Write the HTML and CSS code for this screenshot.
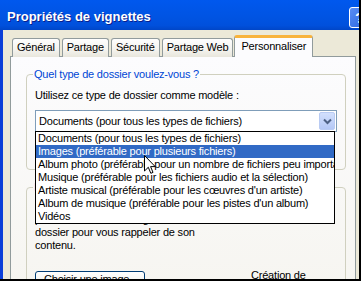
FILE: index.html
```html
<!DOCTYPE html>
<html lang="fr">
<head>
  <meta charset="UTF-8" />
  <title>Propriétés de vignettes</title>
  <link rel="stylesheet" href="styles.css">
</head>
<body>

  <div class="window">
    <div class="titlebar">
      <span class="title">Propriétés de vignettes</span>
      <span class="help-btn">?</span>
    </div>

    <div class="client">
      <div class="tabs">
        <div class="tab">Général</div>
        <div class="tab">Partage</div>
        <div class="tab">Sécurité</div>
        <div class="tab">Partage Web</div>
        <div class="tab active">Personnaliser</div>
      </div>

      <div class="panel">
        <fieldset class="group group-type">
          <legend>Quel type de dossier voulez-vous ?</legend>
          <div class="label">Utilisez ce type de dossier comme modèle :</div>

          <div class="combo">
            <span class="combo-value">Documents (pour tous les types de fichiers)</span>
            <span class="combo-btn">
              <svg width="9" height="7" viewBox="0 0 9 7"><path d="M1 1.5 L4.5 5 L8 1.5" fill="none" stroke="#4d6185" stroke-width="2"/></svg>
            </span>

            <!-- liste ouverte, par-dessus le reste -->
            <ul class="dropdown">
              <li>Documents (pour tous les types de fichiers)</li>
              <li class="selected">Images (préférable pour plusieurs fichiers)</li>
              <li>Album photo (préférable pour un nombre de fichiers peu important)</li>
              <li>Musique (préférable pour les fichiers audio et la sélection)</li>
              <li>Artiste musical (préférable pour les cœuvres d'un artiste)</li>
              <li>Album de musique (préférable pour les pistes d'un album)</li>
              <li>Vidéos</li>
            </ul>
          </div>

          <label class="check"><span class="box"></span>Appliquer aussi ce modèle à tous les sous-dossiers</label>
        </fieldset>

        <fieldset class="group group-pictures">
          <legend>Images de dossiers</legend>
          <div class="pictures-row">
            <div class="pictures-left">
              <p>Pour la vue Miniatures, vous<br>pouvez mettre une image sur ce<br>dossier pour vous rappeler de son<br>contenu.</p>
              <button class="xp-btn">Choisir une image...</button>
            </div>
            <div class="pictures-right">
              <div>Aperçu :</div>
              <div class="preview"></div>
              <div class="preview-caption">Création de</div>
            </div>
          </div>
        </fieldset>
      </div>
    </div>

    <svg class="cursor" width="12" height="20" viewBox="0 0 12 20">
      <path d="M0.5 0.5 L0.5 16 L4.3 12.3 L6.8 18.3 L9 17.4 L6.6 11.6 L11.2 11.6 Z" fill="#fff" stroke="#000" stroke-width="1"/>
    </svg>
  </div>

</body>
</html>
```

FILE: styles.css
```css
* {
  box-sizing: border-box;
}

body {
  margin: 0;
  font-family: 'Liberation Sans', Arial, sans-serif;
  font-size: 11px;
  letter-spacing: -0.2px;
  color: #000;
}

.window {
  position: relative;
  width: 361px;
  height: 281px;
  overflow: hidden;
  display: flex;
  flex-direction: column;
  background: #ece9d8;
  border-right: 2px solid #000;
  border-bottom: 2px solid #000;
}

/* Barre de titre */
.titlebar {
  height: 30px;
  flex-shrink: 0;
  display: flex;
  align-items: center;
  padding-left: 7px;
  background: linear-gradient(to bottom, #0058ee 0%, #0054e3 55%, #0050dc 85%, #0046c8 100%);
}

.title {
  color: #fff;
  font-weight: bold;
  font-size: 13px;
  letter-spacing: 0;
  text-shadow: 1px 1px 0 #0a1e8c;
  margin-top: 3px;
}

.help-btn {
  margin-left: auto;
  margin-right: -11px;
  margin-top: 5px;
  width: 21px;
  height: 21px;
  border: 1px solid #fff;
  border-radius: 3px;
  background: linear-gradient(to bottom right, #5a8ef5, #2663e0);
  color: #fff;
  font-weight: bold;
  font-size: 15px;
  line-height: 19px;
  text-align: center;
}

/* Zone cliente */
.client {
  flex: 1;
  display: flex;
  flex-direction: column;
  padding: 6px 3px 0 7px;
  border-left: 3px solid #0b3fd8;
}

.tabs {
  display: flex;
  align-items: flex-end;
  padding-left: 2px;
  height: 21px;
  position: relative;
  z-index: 2;
  margin-bottom: -1px;
}

.tab {
  height: 19px;
  padding: 0 4px;
  margin-right: 2px;
  border: 1px solid #919b9c;
  border-bottom: none;
  border-radius: 3px 3px 0 0;
  background: linear-gradient(to bottom, #fefefe, #f4f3ee 60%, #e8e6dc);
  line-height: 17px;
  white-space: nowrap;
}

.tab.active {
  height: 22px;
  margin-left: -1px;
  padding: 0 6px;
  background: #fcfcfe;
  border-top: 3px solid #f8b33c;
  line-height: 16px;
}

.panel {
  flex: 1;
  border: 1px solid #919b9c;
  background: linear-gradient(to bottom, #fcfcfe, #f6f5f0);
  padding: 11px 9px 0 15px;
}

/* Groupes */
.group {
  margin: 0;
  border: 1px solid #d0d0bf;
  border-radius: 4px;
  padding: 0 8px;
}

.group legend {
  color: #0046d5;
  padding: 0 1px;
  margin-left: -2px;
  line-height: 13px;
}

.group-type {
  padding-bottom: 14px;
}

.group-pictures {
  margin-top: 11px;
}

.label {
  line-height: 13px;
  margin-top: 8px;
  margin-bottom: 8px;
}

.combo {
  position: relative;
  height: 22px;
  border: 1px solid #7f9db9;
  background: #fff;
  display: flex;
  align-items: center;
  padding-left: 3px;
}

.combo-value {
  flex: 1;
  white-space: nowrap;
}

.combo-btn {
  width: 16px;
  height: 18px;
  margin-right: 1px;
  border: 1px solid #b9cbf3;
  border-radius: 2px;
  background: linear-gradient(to bottom, #d2e0fd, #b4c8f6);
  display: flex;
  align-items: center;
  justify-content: center;
}

.dropdown {
  position: absolute;
  top: 20px;
  left: -1px;
  width: 300px;
  margin: 0;
  padding: 0;
  list-style: none;
  background: #fff;
  border: 1px solid #000;
  z-index: 5;
}

.dropdown li {
  height: 13px;
  line-height: 13px;
  padding-left: 2px;
  white-space: nowrap;
  overflow: hidden;
}

.dropdown li.selected {
  background: #316ac5;
  color: #fff;
}

.check {
  display: flex;
  align-items: center;
  gap: 5px;
  margin-top: 10px;
  line-height: 13px;
}

.check .box {
  width: 13px;
  height: 13px;
  border: 1px solid #1c5180;
  background: #fff;
}

.pictures-row {
  display: flex;
  margin-top: 6px;
}

.pictures-left {
  width: 200px;
}

.pictures-left p {
  margin: 0;
  line-height: 13px;
}

.xp-btn {
  margin-top: 19px;
  width: 110px;
  height: 23px;
  border: 1px solid #003c74;
  border-radius: 3px;
  background: linear-gradient(to bottom, #ffffff, #f0f0ea 70%, #d6d0c5);
  font-family: inherit;
  font-size: 11px;
  letter-spacing: -0.2px;
  line-height: 13px;
  text-align: left;
  padding: 0 0 7px 8px;
  vertical-align: top;
}

.pictures-right {
  margin-left: 15px;
  line-height: 13px;
}

.preview {
  height: 56px;
}

.preview-caption {
  padding-left: 1px;
}

.cursor {
  position: absolute;
  left: 144px;
  top: 155px;
  z-index: 10;
}
```
